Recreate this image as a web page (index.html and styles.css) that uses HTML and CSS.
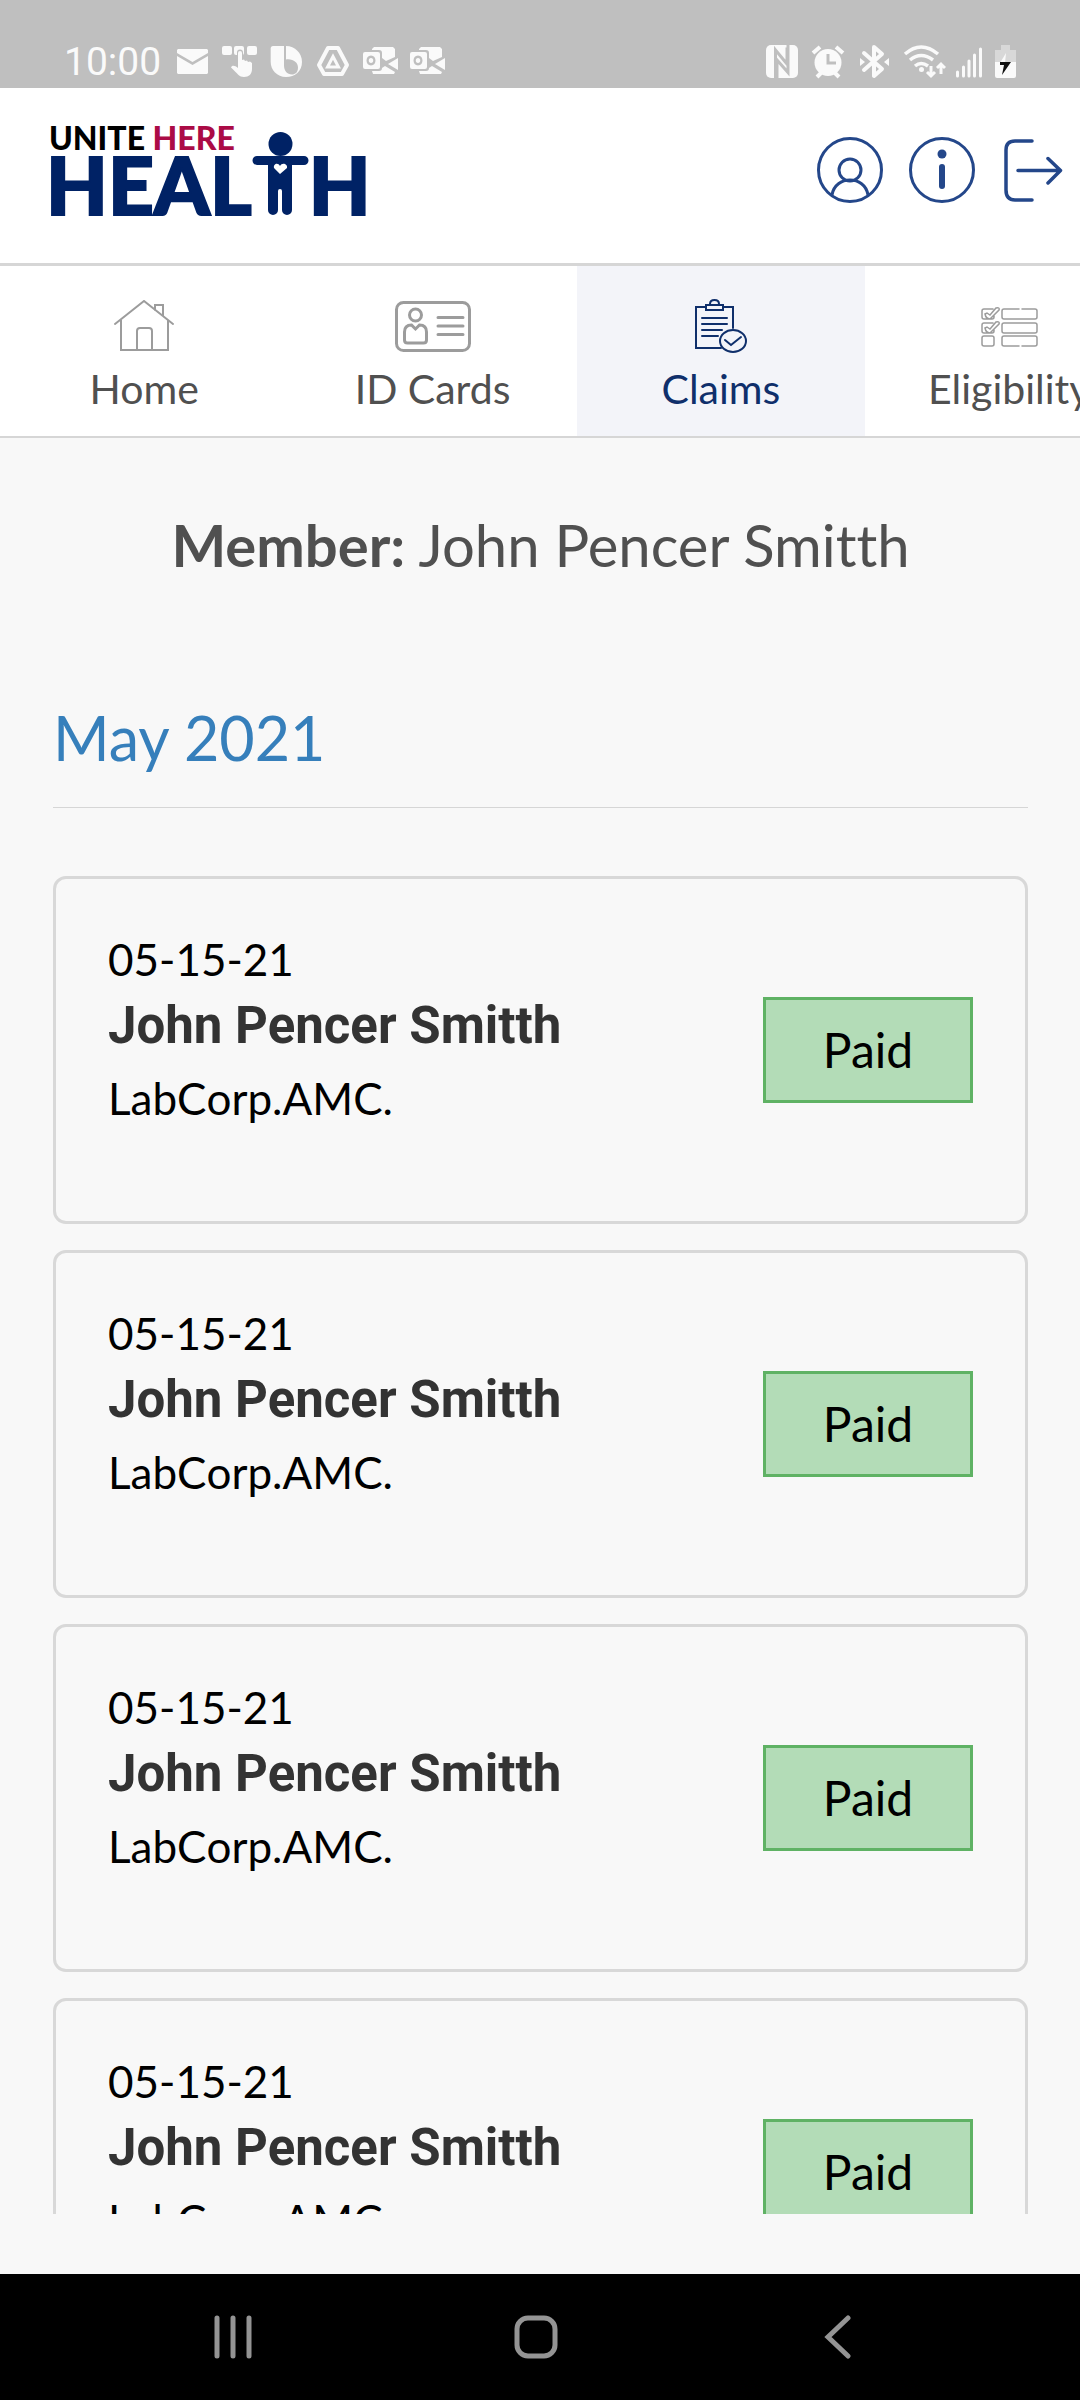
FILE: index.html
```html
<!DOCTYPE html>
<html lang="en">
<head>
  <meta charset="UTF-8" />
  <meta name="viewport" content="width=device-width, initial-scale=1.0"/>
  <title>Claims - Unite Here Health</title>
  <link rel="stylesheet" href="styles.css">
</head>
<body>
  <div class="status-bar">
    <div class="status-left">
      <span class="time">10:00</span>
      <svg width="36" height="36" viewBox="0 0 36 36"><path d="M4 5h29l1 1v3l-15.500 9L3 9V6zM3 12l15.500 9L34 12v17l-1 1H4l-1-1z"/></svg>
      <svg width="36" height="36" viewBox="0 0 36 36"><rect x="1" y="2" width="10" height="9" rx="2"/><rect x="13" y="2" width="10" height="9" rx="2"/><rect x="26" y="2" width="10" height="9" rx="2"/><path class="cut-line" d="M17 20V8.500a2 2 0 0 1 4 0V16z"/><path d="M17 22V9a2 2 0 0 1 4 0v7l2-.500 1 1.500 2-.500 1 1.500 2-.500 2 1.500v6c0 5-3 8-8 8-5 0-6-3-13-9.500 1-2.500 4-2 7 .500z"/></svg>
      <svg width="36" height="36" viewBox="0 0 36 36"><path d="M5 2h13c9 0 16 7 16 16s-7 15-16 15S2.700 26 2.700 18V4.500C2.700 3 3.500 2 5 2z"/><path class="cut" d="M16 1h2v14.500c7-1 12 3 12 8s-3 7-6 7c-5 0-8-4-8-9z"/></svg>
      <svg width="36" height="36" viewBox="0 0 36 36"><path class="line" stroke-width="4" stroke-linejoin="round" d="M13 4h10l9 17-5 9H9l-5-9z"/><path class="line" stroke-width="3" d="M18 12.500l5.500 10.500h-11z"/></svg>
      <svg width="36" height="36" viewBox="0 0 36 36"><path d="M12 3h19l2 2v8l-9 4-4-3V9c0-2-1-3-3-3h-7V5zM36 14v12l-10-6zM10 27h7c2 0 3-1 3-3l3-2 10 6-1 2H11z"/><path fill-rule="evenodd" d="M3 8h13q2 0 2 2v13q0 2-2 2H3q-2 0-2-2V10q0-2 2-2zM9 11.500c-6 0-6 10 0 10s6-10 0-10zm0 2.500c3 0 3 5 0 5s-3-5 0-5z"/></svg>
      <svg width="36" height="36" viewBox="0 0 36 36"><path d="M12 3h19l2 2v8l-9 4-4-3V9c0-2-1-3-3-3h-7V5zM36 14v12l-10-6zM10 27h7c2 0 3-1 3-3l3-2 10 6-1 2H11z"/><path fill-rule="evenodd" d="M3 8h13q2 0 2 2v13q0 2-2 2H3q-2 0-2-2V10q0-2 2-2zM9 11.500c-6 0-6 10 0 10s6-10 0-10zm0 2.500c3 0 3 5 0 5s-3-5 0-5z"/></svg>
    </div>
    <div class="status-right">
      <svg width="36" height="36" viewBox="0 0 36 36"><rect x="2" y="1" width="32" height="33" rx="5"/><path class="cut-thin" d="M11.500 34V6l11.500 14V3.500M13 34V16l11 12.500V1"/></svg>
      <svg width="36" height="36" viewBox="0 0 36 36"><circle cx="18" cy="18.500" r="13.500"/><path class="line" stroke-width="4" d="M3 9l7-6M33 9l-7-6M7 33l4-4M29 33l-4-4"/><path class="cut-thin" d="M18 10v9h8"/></svg>
      <svg width="36" height="36" viewBox="0 0 36 36"><path class="line" stroke-width="4" stroke-linejoin="round" stroke-linecap="round" d="M8 9l18 16-8 7V3l8 7L8 26"/><path d="M4 14l5 4-5 4zM33 14l-5 4 5 4z"/></svg>
      <svg width="44" height="36" viewBox="0 0 44 36"><path class="line" stroke-width="3.500" d="M3 10q16-14 33 0M8 16q11-9 23 0M13 22q6-5 13 0"/><circle cx="19.500" cy="25.500" r="2.500"/><path class="line" stroke-width="3" d="M29 22v10m-4-4l4 4 4-4M39 30V20m-4 4l4-4 4 4"/></svg>
      <svg width="26" height="36" viewBox="0 0 26 36"><path class="line" stroke-width="3" stroke-linecap="round" d="M1.500 28v4M7.500 23v9M13 17v15M18.500 11v21M24.500 5v27"/></svg>
      <svg width="26" height="36" viewBox="0 0 26 36"><path class="dim" d="M9 1h9v5h6v12H3V6h6z"/><path d="M3 18h21v14q0 2-2 2H5q-2 0-2-2z"/><path d="M14 9l-6 10h5z"/><path class="bolt" d="M8 18h11l-9 13 2-10H8z"/></svg>
    </div>
  </div>

  <header class="header">
    <a href="#" class="logo" aria-label="Unite Here Health">
      <span class="logo-top">UNITE <span class="logo-here">HERE</span></span>
      <span class="logo-bottom">HEAL<svg class="logo-person" width="57" height="84" viewBox="0 0 57 84"><circle cx="28.500" cy="12" r="12"/><path d="M5 24h47a4.500 4.500 0 0 1 0 9H40v45a5 5 0 0 1-10 0V59a2 2 0 0 0-4 0v19a5 5 0 0 1-10 0V33H5a4.500 4.500 0 0 1 0-9z"/><path class="heart" d="M28 42l-6-6c-1-4 4-6 6-2 2-4 8-2 7 2z"/></svg>H</span>
    </a>
    <div class="header-actions">
      <button aria-label="Profile"><svg width="66" height="66" viewBox="0 0 66 66"><circle cx="33" cy="33" r="31.500"/><circle cx="33" cy="33" r="11"/><path d="M15 58c3-20 33-20 36 0"/></svg></button>
      <button aria-label="Information"><svg width="66" height="66" viewBox="0 0 66 66"><circle cx="33" cy="33" r="31.500"/><circle class="dot" cx="33" cy="17" r="4.500"/><path stroke-width="6" d="M33 30v19"/></svg></button>
      <button aria-label="Log out"><svg width="66" height="66" viewBox="0 0 66 66"><path stroke-width="3.500" d="M31 4H14Q5 4 5 13v40q0 10 9 10h17M17 33.500h42M47 21.500l12.500 12L47 46"/></svg></button>
    </div>
  </header>

  <nav class="tabs">
    <a href="#" class="tab">
      <span class="tab-icon"><svg width="60" height="52" viewBox="0 0 60 52"><path stroke-width="2" d="M1 24L30 1l29 23M7 20v30h47V20M23 50V31q0-3 3-3h9q3 0 3 3v19M41 10V5h8v11"/></svg></span>
      Home
    </a>
    <a href="#" class="tab">
      <span class="tab-icon"><svg width="76" height="52" viewBox="0 0 76 52"><rect x="1.500" y="2.500" width="73" height="48" rx="7"/><circle cx="20.500" cy="15" r="6"/><path d="M20.500 29l-4-4q-7 0-7 7v8q0 3 3 3h16q3 0 3-3v-8q0-7-7-7zM43 17.500h25M43 26h25M43 34.500h25"/></svg></span>
      ID Cards
    </a>
    <a href="#" class="tab active">
      <span class="tab-icon"><svg width="52" height="54" viewBox="0 0 52 54"><path stroke-width="2" d="M11 8H1v41h25M28 8h10v21M11 6h17v5H11zM15 5q0-4 4.500-4T24 5M7 19h25M7 25h25M7 31h20M7 37h16"/><ellipse cx="38" cy="42" rx="13" ry="11" stroke-width="2"/><path stroke-width="2" d="M30 41l6 5 10-8"/></svg></span>
      Claims
    </a>
    <a href="#" class="tab">
      <span class="tab-icon"><svg width="58" height="42" viewBox="0 0 58 42"><path stroke-width="1.500" d="M13 4H4q-2 0-2 2v6q0 2 2 2h8q2 0 2-2v-2M13 18H4q-2 0-2 2v6q0 2 2 2h8q2 0 2-2v-2M39 4H24q-2 0-2 2v6q0 2 2 2h31q2 0 2-2V6q0-2-2-2H42M39 18H24q-2 0-2 2v6q0 2 2 2h31q2 0 2-2v-6q0-2-2-2H39M39 41H24q-2 0-2-2v-6q0-2 2-2h31q2 0 2 2v6q0 2-2 2H42M5 9l2-1 3 2 6-7q4-1 3 2l-9 9q-4 0-5-5zM5 23l2-1 3 2 6-7q4-1 3 2l-9 9q-4 0-5-5z"/><rect x="2" y="31" width="12" height="10" rx="2" stroke-width="1.500"/></svg></span>
      Eligibility
    </a>
  </nav>

  <main class="content">
    <h1 class="member"><strong>Member:</strong> John Pencer Smitth</h1>
    <h2 class="month">May 2021</h2>

    <div class="claims">
      <div class="card">
        <div class="card-info">
          <p class="date">05-15-21</p>
          <h3>John Pencer Smitth</h3>
          <p class="provider">LabCorp.AMC.</p>
        </div>
        <span class="badge">Paid</span>
      </div>
      <div class="card">
        <div class="card-info">
          <p class="date">05-15-21</p>
          <h3>John Pencer Smitth</h3>
          <p class="provider">LabCorp.AMC.</p>
        </div>
        <span class="badge">Paid</span>
      </div>
      <div class="card">
        <div class="card-info">
          <p class="date">05-15-21</p>
          <h3>John Pencer Smitth</h3>
          <p class="provider">LabCorp.AMC.</p>
        </div>
        <span class="badge">Paid</span>
      </div>
      <div class="card">
        <div class="card-info">
          <p class="date">05-15-21</p>
          <h3>John Pencer Smitth</h3>
          <p class="provider">LabCorp.AMC.</p>
        </div>
        <span class="badge">Paid</span>
      </div>
    </div>
  </main>

  <div class="phone-nav">
    <button aria-label="Recent apps"><svg width="44" height="44" viewBox="0 0 44 44"><path d="M5 3v38M21 3v38M37 3v38"/></svg></button>
    <button aria-label="Home screen"><svg width="44" height="44" viewBox="0 0 44 44"><rect x="3" y="3" width="38" height="38" rx="11"/></svg></button>
    <button aria-label="Back"><svg width="44" height="44" viewBox="0 0 44 44"><path d="M32 3L12 22l20 19"/></svg></button>
  </div>
</body>
</html>
```
FILE: styles.css
```css
* {
  box-sizing: border-box;
}
body {
  font-family: Lato, sans-serif;
  font-variant-ligatures: none;
  margin: 0;
  height: 100vh;
  display: flex;
  flex-direction: column;
  overflow: hidden;
  background: #f8f8f8;
  color: #000;
}
h1, h2, h3, p {
  margin: 0;
  font-weight: normal;
}
a {
  text-decoration: none;
}
button {
  background: none;
  border: none;
  padding: 0;
  cursor: pointer;
}
svg {
  display: block;
  flex: none;
}

/* Phone status bar */
.status-bar {
  flex: none;
  display: flex;
  justify-content: space-between;
  padding: 44px 62px 8px 64px;
  background: #bfbfbf;
}
.status-left, .status-right {
  display: flex;
  gap: 10px;
}
.status-left {
  gap: 11px;
}
.status-bar svg {
  fill: #fafafa;
}
.time {
  margin-right: 2px;
  font-family: Roboto, sans-serif;
  font-size: 39px;
  line-height: 36px;
  color: #fafafa;
}
.status-bar .line {
  fill: none;
  stroke: #fafafa;
}
.status-bar .cut {
  fill: #bfbfbf;
}
.status-bar .cut-line {
  fill: #bfbfbf;
  stroke: #bfbfbf;
  stroke-width: 2;
}
.status-bar .cut-thin {
  fill: none;
  stroke: #bfbfbf;
  stroke-width: 3;
}
.status-bar .dim {
  fill: #d8d8d8;
}
.status-bar .bolt {
  fill: #111;
}

/* Header */
.header {
  flex: none;
  display: flex;
  justify-content: space-between;
  align-items: center;
  height: 178px;
  padding: 0 13px 12px 46px;
  background: #fff;
  border-bottom: 3px solid #d6d6d6;
}
.logo {
  display: flex;
  flex-direction: column;
  font-weight: 900;
  color: #002265;
}
.logo-top {
  font-size: 32px;
  line-height: 28px;
  padding-left: 3px;
  color: #000;
}
.logo-here {
  color: #ab0b46;
}
.logo-bottom {
  display: flex;
  font-size: 80px;
  line-height: 64px;
  -webkit-text-stroke: 2px #002265;
}
.logo-person {
  margin-top: -20px;
  fill: #002265;
  stroke: none;
}
.logo-person .heart {
  fill: #fff;
}
.header-actions {
  display: flex;
  gap: 26px;
}
.header-actions svg {
  fill: none;
  stroke: #24478a;
  stroke-width: 3;
  stroke-linecap: round;
  stroke-linejoin: round;
}
.header-actions .dot {
  fill: #24478a;
  stroke: none;
}

/* Tabs */
.tabs {
  flex: none;
  display: flex;
  overflow: hidden;
  background: #fff;
  border-bottom: 2px solid #d6d6d6;
}
.tab {
  flex: 0 0 26.7%;
  display: flex;
  flex-direction: column;
  align-items: center;
  gap: 12px;
  padding: 33px 0 23px;
  font-size: 41px;
  line-height: 48px;
  color: #505050;
}
.tab-icon {
  display: flex;
  align-items: center;
  height: 54px;
}
.tab svg {
  fill: none;
  stroke: #9c9c9c;
  stroke-width: 3;
  stroke-linecap: round;
}
.tab.active {
  background: #f3f4f9;
  color: #0f2f6b;
}
.tab.active svg {
  stroke: #0f2f6b;
}

/* Claims list */
.content {
  flex: 1;
  min-height: 0;
  overflow: hidden;
  margin-bottom: 60px;
  padding: 72px 52px 0 53px;
}
.member {
  font-size: 58px;
  line-height: 70px;
  text-align: center;
  color: #505050;
}
.month {
  margin: 121px 0 68px;
  padding-bottom: 32px;
  font-size: 61px;
  line-height: 74px;
  color: #367fbb;
  border-bottom: 1px solid #d6d6d6;
}
.claims {
  display: flex;
  flex-direction: column;
  gap: 26px;
}
.card {
  display: flex;
  justify-content: space-between;
  align-items: center;
  padding: 0 52px;
  border: 3px solid #d8d8d8;
  border-radius: 13px;
}
.card-info {
  padding: 49px 0 87px;
}
.date {
  font-size: 44px;
  line-height: 62px;
}
.card h3 {
  font-family: Roboto, sans-serif;
  font-size: 51px;
  font-weight: bold;
  line-height: 72px;
  color: #333;
}
.provider {
  font-size: 44px;
  line-height: 72px;
  font-kerning: none;
}
.badge {
  width: 210px;
  font-size: 48px;
  line-height: 100px;
  text-align: center;
  background: #b3dcb7;
  border: 3px solid #5fb264;
}

/* Phone buttons */
.phone-nav {
  flex: none;
  display: flex;
  justify-content: space-between;
  padding: 41px 220px 41px 212px;
  background: #000;
}
.phone-nav svg {
  fill: none;
  stroke: #949494;
  stroke-width: 5;
  stroke-linecap: round;
}
```
